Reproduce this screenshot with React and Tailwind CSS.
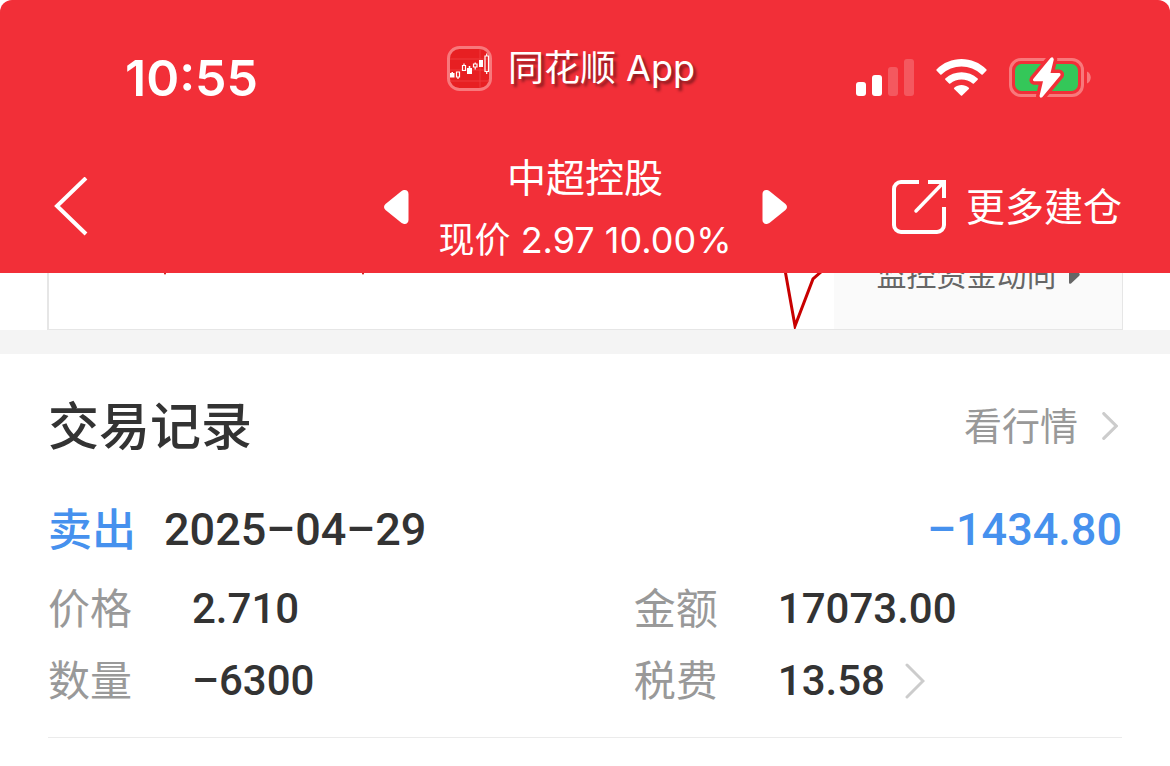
import { clsx } from 'clsx'

const record = {
    side: '卖出',
    date: '2025–04–29',
    profit: '–1434.80',
    fields: [
        { label: '价格', value: '2.710' },
        { label: '金额', value: '17073.00' },
        { label: '数量', value: '–6300' },
        { label: '税费', value: '13.58', link: true }
    ]
}

function AppLogo() {
    return (
        <svg width="45" height="45" viewBox="0 0 45 45" fill="none" aria-hidden="true">
            <rect x="1.5" y="1.5" width="42" height="42" rx="11" fill="#e71f22" stroke="#f8787b" strokeWidth="3" />
            <path d="M3 13h39M3 24h39M3 35h39M33 3v39" stroke="#ee3a3d" strokeWidth="1" />
            <path d="M3 27h1.500v-1h1.500v1h1.500v4.500H3zM20 22h1.700v-2h1.600v2H25v6h-5zM32 14h4v7h-4z" fill="#fff" />
            <path d="M9.500 26h3v5h-3zM11 31v2M15.500 19.500h3v5h-3zM17 17.500v2M26.500 18h3.500v3h-3.500zM28.200 16.500V18M28.200 21v2.500M38 10h3.500v15.500H38zM39.700 7.500V10M39.700 25.500v2.500" stroke="#fff" strokeWidth="1.200" />
        </svg>
    )
}

function SignalIcon() {
    return (
        <svg width="58" height="38" viewBox="0 0 58 38" fill="#fff" aria-hidden="true">
            <rect x="0" y="23" width="10" height="14" rx="3" />
            <rect x="16" y="16" width="10" height="21" rx="3" />
            <rect x="32" y="8" width="10" height="29" rx="3" opacity="0.2" />
            <rect x="48" y="0" width="10" height="37" rx="3" opacity="0.2" />
        </svg>
    )
}

function WifiIcon() {
    return (
        <svg width="51" height="38" viewBox="0 0 51 38" fill="#fff" aria-hidden="true">
            <path d="M.500 10.500C14-3.500 37-3.500 50.500 10.500q.4.600 0 1.100l-3.800 3.800q-.6.500-1.200 0C34.500 4.700 16.500 4.700 5.500 15.400q-.6.500-1.200 0L.500 11.600q-.4-.5 0-1.100z" />
            <path d="M9.300 19.500C18.500 11 32.500 11 41.700 19.500q.5.600 0 1.200L37.900 24.500q-.6.500-1.200 0C30.500 19 20.500 19 14.300 24.500q-.6.500-1.200 0L9.300 20.700q-.5-.6 0-1.200z" />
            <path d="M18.200 28.700c4.300-3.600 10.300-3.600 14.600 0q.6.600 0 1.200l-6.700 6.700q-.6.500-1.200 0l-6.700-6.700q-.6-.6 0-1.200z" />
        </svg>
    )
}

function BatteryIcon() {
    const bolt = 'M41.500 1 24.200 22q-.8 1.900 1 2.300H34L30.500 39q.4 2.500 2.700 1.200L51.300 18.500q.8-2-1-2.500H41.500L44.800 2.500Q44-1 41.500 1z'
    return (
        <svg width="82" height="42" viewBox="0 0 82 42" fill="none" aria-hidden="true">
            <rect x="1.500" y="2.500" width="72" height="36" rx="10.500" stroke="#f8787b" strokeWidth="3" />
            <path d="M78 14.500c5 2 5 10 0 12z" fill="#f8787b" />
            <rect x="6" y="7" width="63" height="27" rx="6.500" fill="#34c759" />
            <path d={bolt} fill="#f22f38" stroke="#f22f38" strokeWidth="7" strokeLinejoin="round" />
            <path d={bolt} fill="#fff" />
        </svg>
    )
}

function ShareIcon() {
    return (
        <svg width="55" height="56" viewBox="0 0 55 56" fill="none" stroke="#fff" strokeWidth="4" aria-hidden="true">
            <path d="M28 3H10a7 7 0 0 0-7 7v36a7 7 0 0 0 7 7h36a7 7 0 0 0 7-7V28" />
            <path d="M37 3h16v16" />
            <path d="M52 4 25 32" strokeLinecap="round" strokeWidth="3.500" />
        </svg>
    )
}

function Triangle({ flip }) {
    return (
        <svg width="25" height="34" viewBox="0 0 25 34" fill="#fff" className={clsx(flip && 'rotate-180')} aria-hidden="true">
            <path d="M1.500 14 17 1.500C21-1.500 24.500.5 24.500 4v26c0 3.500-3.500 5.500-7.500 2.500L1.500 20q-3-3 0-6z" />
        </svg>
    )
}

function Chevron({ className }) {
    return (
        <svg viewBox="0 0 20 36" fill="none" stroke="#ccc" strokeLinecap="round" className={className} aria-hidden="true">
            <path d="m2 2 16 16L2 34" />
        </svg>
    )
}

function Header() {
    return (
        <header className="rounded-t-xl bg-[#f22f38] text-white">
            <div className="flex h-34 items-center pt-5 pr-[79px] pl-[125px]">
                <time className="font-[Inter] text-[50px] leading-none font-semibold">10:55</time>
                <div className="mr-auto mb-5 ml-[189px] flex items-center gap-4">
                    <AppLogo />
                    <span className="text-4xl whitespace-nowrap text-shadow-[3px_3px_3px_rgb(0_0_0_/_0.45)]">同花顺 App</span>
                </div>
                <div className="flex items-center gap-[22px]">
                    <SignalIcon />
                    <WifiIcon />
                    <BatteryIcon />
                </div>
            </div>
            <nav className="grid h-[137px] grid-cols-[1fr_auto_1fr] items-center px-12 pt-1">
                <button type="button" aria-label="返回" className="justify-self-start pl-1.5">
                    <svg width="34" height="60" viewBox="0 0 34 60" fill="none" stroke="#fff" strokeWidth="4" aria-hidden="true">
                        <path d="M32 1 3 29l29 28" />
                    </svg>
                </button>
                <div className="flex items-center gap-[30px]">
                    <button type="button" aria-label="上一只">
                        <Triangle />
                    </button>
                    <div className="pt-1 text-center">
                        <h1 className="text-[39px] leading-[62px]">中超控股</h1>
                        <p className="text-4xl leading-[62px] whitespace-nowrap">现价 2.97 10.00%</p>
                    </div>
                    <button type="button" aria-label="下一只">
                        <Triangle flip />
                    </button>
                </div>
                <a href="#more" className="flex items-center gap-5 justify-self-end text-[39px] leading-none whitespace-nowrap">
                    <ShareIcon />
                    更多建仓
                </a>
            </nav>
        </header>
    )
}

function ChartPanel() {
    return (
        <section className="px-[47px]">
            <div className="flex h-[57px] overflow-hidden border-b border-l-2 border-[#e6e6e6]">
                <svg
                    viewBox="0 0 785 56"
                    preserveAspectRatio="xMaxYMin slice"
                    fill="none"
                    stroke="#c80000"
                    strokeWidth="3"
                    className="h-14 min-w-0 flex-1"
                    aria-hidden="true"
                >
                    <path d="M105-20l11 20 11-20M303-20l11 20 11-20" strokeWidth="2" />
                    <path d="M736-3 746 53 764 6l9-8" />
                </svg>
                <a
                    href="#funds"
                    className="flex w-[289px] items-end justify-center gap-3 border-r border-[#e6e6e6] bg-[#fafafa] pb-9 text-[30px] leading-9 whitespace-nowrap text-[#666]"
                >
                    监控资金动向
                    <svg width="11" height="20" viewBox="0 0 11 20" fill="#666" className="mb-2" aria-hidden="true">
                        <path d="M0 2q0-2 2-1l8 7q1.500 1.500 0 3l-8 7.500q-2 1-2-1z" />
                    </svg>
                </a>
            </div>
        </section>
    )
}

function TradeRecord({ side, date, profit, fields }) {
    return (
        <article className="border-b border-[#ebebeb] pb-5">
            <div className="flex h-20 items-center text-[#4691ee]">
                <span className="text-[44px] font-medium">{side}</span>
                <time className="ml-7 font-[Roboto] text-[45px] font-medium text-[#333]">{date}</time>
                <span className="ml-auto font-[Roboto] text-[45px] font-medium">{profit}</span>
            </div>
            <dl className="grid grid-cols-11 pt-[3px]">
                {fields.map(({ label, value, link }, i) => (
                    <div key={label} className={clsx('flex h-18 items-center', i % 2 ? 'col-span-5' : 'col-span-6')}>
                        <dt className="w-36 text-[42px] leading-none text-[#999]">{label}</dt>
                        <dd className="flex items-center gap-5 font-[Roboto] text-[42px] leading-none font-medium text-[#333]">
                            {value}
                            {link && <Chevron className="h-9 w-5 stroke-3" />}
                        </dd>
                    </div>
                ))}
            </dl>
        </article>
    )
}

export default function App() {
    return (
        <div lang="zh-CN" className="min-h-screen bg-white font-[Inter,'Noto_Sans_CJK_SC',sans-serif]">
            <Header />
            <ChartPanel />
            <div className="h-6 bg-[#f4f4f4]" />
            <main className="px-12">
                <div className="flex h-[136px] items-center justify-between pt-2">
                    <h2 className="text-[51px] leading-none font-medium text-[#333]">交易记录</h2>
                    <a href="#quote" className="flex items-center gap-6 pr-1 text-[38px] leading-none text-[#999]">
                        看行情
                        <Chevron className="h-7 w-4 stroke-4" />
                    </a>
                </div>
                <TradeRecord {...record} />
            </main>
        </div>
    )
}
